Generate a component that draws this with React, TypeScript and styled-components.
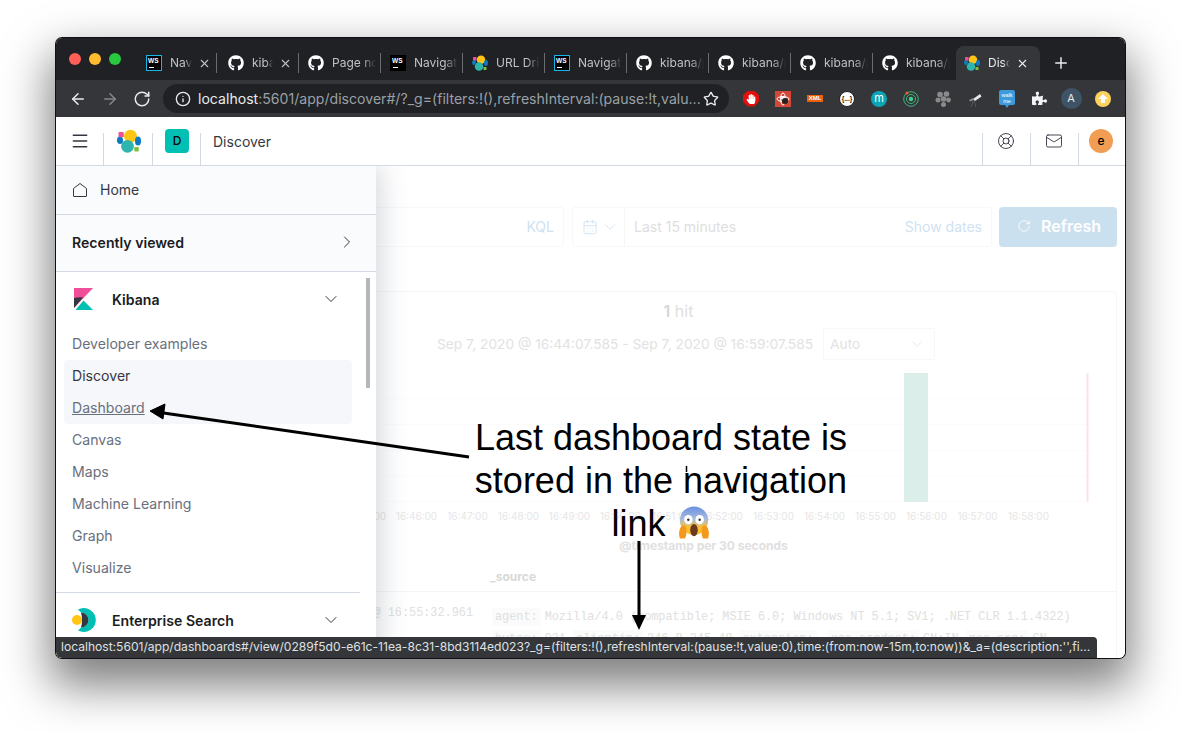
import React from 'react';
import styled, { createGlobalStyle } from 'styled-components';
import { ArrowLeft, ArrowRight, RotateCw, Info, Star, X, Plus, ChevronDown, ChevronRight, Menu, LifeBuoy, Mail, CalendarDays } from 'lucide-react';
import { FaGithub, FaHandPaper, FaPuzzlePiece } from 'react-icons/fa';

const Global = createGlobalStyle`
  html, body { margin: 0; padding: 0; background: #fff; width: 1181px; height: 732px; overflow: hidden; }
  * { box-sizing: border-box; }
  body { font-family: Inter, "Liberation Sans", sans-serif; }
`;

const Page = styled.div`
  width: 1181px;
  height: 732px;
  padding: 38px 0 0 56px;
`;
const Win = styled.div`
  width: 1069px;
  height: 620px;
  border-radius: 6px;
  overflow: hidden;
  display: flex;
  flex-direction: column;
  position: relative;
  box-shadow: 0 0 0 1px #111, 0 22px 46px 6px rgba(0,0,0,.5);
`;
const TitleBar = styled.div`
  height: 42px;
  background: #202124;
  display: flex;
  align-items: flex-end;
  flex-shrink: 0;
`;
const Lights = styled.div`
  width: 79px;
  height: 42px;
  padding: 15px 0 0 13px;
  display: flex;
  gap: 8px;
  flex-shrink: 0;
`;
const Light = styled.span<{ $c: string }>`
  width: 12px;
  height: 12px;
  border-radius: 50%;
  background: ${p => p.$c};
`;
const Tab = styled.div<{ $pad: number; $last?: boolean }>`
  width: 82px;
  height: 34px;
  padding: 0 0 0 ${p => p.$pad}px;
  display: flex;
  align-items: center;
  position: relative;
  flex-shrink: 0;
  color: #bdc1c6;
  ${p => (p.$last ? '' : `&::after { content: ''; position: absolute; right: 0; top: 7px; height: 20px; width: 1px; background: #6a6c70; }`)}
  svg.fav { flex-shrink: 0; }
`;
const ActiveTab = styled.div`
  width: 84px;
  height: 34px;
  margin-left: 1px;
  padding-left: 8px;
  display: flex;
  align-items: center;
  flex-shrink: 0;
  background: #35363a;
  border-radius: 8px 8px 0 0;
  color: #e8eaed;
  svg.fav { flex-shrink: 0; }
`;
const TabTitle = styled.span<{ $w: number }>`
  font: 12px/14px Inter, "Liberation Sans", sans-serif;
  margin: -1px 0 0 8px;
  width: ${p => p.$w}px;
  overflow: hidden;
  white-space: nowrap;
  mask-image: linear-gradient(to right, #000 70%, transparent);
`;
const TabClose = styled(X)`
  width: 13px;
  height: 13px;
  margin-left: 6px;
  flex-shrink: 0;
`;
const WsBadge = styled.span<{ $framed?: boolean }>`
  width: 16px;
  height: 16px;
  flex-shrink: 0;
  background: #000;
  border: 1px solid ${p => (p.$framed ? '#1bb5e8' : '#000')};
  color: #fff;
  font: 700 6.5px/7px "Liberation Sans", sans-serif;
  padding: 1px 0 0 1px;
  position: relative;
  &::after { content: ''; position: absolute; left: 2px; bottom: 2px; width: 5px; height: 1px; background: #fff; }
`;
const NewTab = styled(Plus)`
  color: #e8eaed;
  width: 18px;
  height: 18px;
  margin: 0 0 8px 12px;
`;
const Toolbar = styled.div`
  height: 37px;
  background: #35363a;
  display: flex;
  align-items: center;
  flex-shrink: 0;
  color: #e8eaed;
`;
const NavBtn = styled.span<{ $dim?: boolean }>`
  width: 32px;
  display: flex;
  justify-content: center;
  color: ${p => (p.$dim ? '#85878a' : '#e8eaed')};
  svg { width: 18px; height: 18px; }
`;
const NavGroup = styled.div`
  display: flex;
  padding-left: 6px;
  width: 107px;
  flex-shrink: 0;
`;
const Omni = styled.div`
  width: 566px;
  height: 29px;
  border-radius: 15px;
  background: #202124;
  display: flex;
  align-items: center;
  padding: 0 10px 0 12px;
  flex-shrink: 0;
`;
const OmniText = styled.div`
  font: 14.1px Inter, "Liberation Sans", sans-serif;
  color: #9aa0a6;
  margin-left: 7px;
  flex: 1;
  white-space: nowrap;
  overflow: hidden;
  b { font-weight: 400; color: #e8eaed; }
`;
const Exts = styled.div`
  display: flex;
  padding-left: 6px;
`;
const Ext = styled.span`
  width: 32px;
  height: 24px;
  display: flex;
  align-items: center;
  justify-content: center;
`;
const Octagon = styled.span`
  width: 16px;
  height: 16px;
  background: #e0100f;
  clip-path: polygon(30% 0, 70% 0, 100% 30%, 100% 70%, 70% 100%, 30% 100%, 0 70%, 0 30%);
  display: flex;
  align-items: center;
  justify-content: center;
`;
const Circle = styled.span<{ $bg: string; $size?: number; $fg?: string }>`
  width: ${p => p.$size ?? 16}px;
  height: ${p => p.$size ?? 16}px;
  border-radius: 50%;
  background: ${p => p.$bg};
  color: ${p => p.$fg ?? '#fff'};
  display: flex;
  align-items: center;
  justify-content: center;
  font: 11px/1 Inter, "Liberation Sans", sans-serif;
`;
const JsonBadge = styled.span`
  width: 16px;
  height: 16px;
  border-radius: 50%;
  background: #fff;
  border: 1px solid #222;
  color: #111;
  font: 700 6.5px/14px "Liberation Sans", sans-serif;
  text-align: center;
  white-space: nowrap;
`;
const XmlTag = styled.span`
  background: #e8650f;
  color: #fff;
  font: 700 6px/7px "Liberation Sans", sans-serif;
  width: 16px;
  height: 7px;
  text-align: center;
`;
const Header = styled.header`
  height: 49px;
  background: #fff;
  border-bottom: 1px solid #d3dae6;
  display: flex;
  align-items: stretch;
  flex-shrink: 0;
`;
const HeaderCell = styled.div<{ $w: number; $border: 'left' | 'right' }>`
  width: ${p => p.$w}px;
  flex-shrink: 0;
  display: flex;
  align-items: center;
  justify-content: center;
  position: relative;
  padding-right: ${p => (p.$border === 'left' ? 1 : 0)}px;
  &::after { content: ''; position: absolute; ${p => p.$border}: 0; top: 16px; bottom: 0; width: 1px; background: #d3dae6; }
`;
const SpaceBadge = styled.span`
  width: 24px;
  height: 24px;
  border-radius: 4px;
  background: #00bfb3;
  color: #000;
  font: 500 12px/24px Inter, sans-serif;
  text-align: center;
`;
const Crumb = styled.div`
  font: 400 14px Inter, sans-serif;
  color: #343741;
  padding-left: 12px;
  flex: 1;
  align-self: center;
`;
const Avatar = styled.span`
  width: 24px;
  height: 24px;
  border-radius: 50%;
  background: #f19e54;
  color: #000;
  font: 500 12px/24px Inter, sans-serif;
  text-align: center;
`;
const Body = styled.main`
  flex: 1;
  position: relative;
  overflow: hidden;
  background: #fff;
  padding: 41px 8px 0;
`;
const SearchRow = styled.div`
  display: flex;
  height: 40px;
  gap: 8px;
`;
const SearchBox = styled.div`
  flex: 1;
  border: 1px solid #f8f8f8;
  border-radius: 2px;
  display: flex;
  align-items: center;
  justify-content: flex-end;
  padding: 0 9px 1px 0;
  font-size: 14px;
  color: #cfe2f1;
`;
const DateBox = styled.div`
  width: 420px;
  margin-right: -1px;
  flex-shrink: 0;
  border: 1px solid #f8f8f8;
  border-radius: 2px;
  display: flex;
  align-items: center;
  font-size: 14px;
`;
const DatePick = styled.div`
  width: 52px;
  height: 100%;
  border-right: 1px solid #f6f6f6;
  display: flex;
  align-items: center;
  padding-left: 9px;
  gap: 3px;
  color: #cfe2f1;
  flex-shrink: 0;
`;
const DateText = styled.span`
  color: #dedede;
  margin: -1px 0 0 9px;
  flex: 1;
`;
const ShowDates = styled.span`
  color: #cfe2f1;
  margin: -1px 9px 0 0;
`;
const Refresh = styled.div`
  width: 118px;
  flex-shrink: 0;
  background: #cbe0ef;
  border-radius: 4px;
  color: #fff;
  font: 600 16px Inter, sans-serif;
  display: flex;
  align-items: center;
  justify-content: center;
  gap: 10px;
  padding: 0 0 2px 2px;
`;
const Panel = styled.section`
  margin-top: 44px;
  border: 1px solid #f7f7f7;
  border-radius: 4px 4px 0 0;
  height: 400px;
`;
const Hits = styled.div`
  padding: 9px 0 0 176px;
  text-align: center;
  font-size: 16px;
  line-height: 20px;
  color: #e0e0e0;
  b { font-weight: 600; color: #d6d6d6; }
`;
const RangeRow = styled.div`
  display: flex;
  align-items: center;
  padding-left: 372px;
  margin-top: 7px;
  height: 32px;
  font-size: 13.75px;
  color: #e2e2e2;
  white-space: nowrap;
`;
const AutoSelect = styled.div`
  margin-left: 10px;
  width: 112px;
  height: 32px;
  border: 1px solid #f8f8f8;
  display: flex;
  align-items: center;
  justify-content: space-between;
  padding: 0 8px 0 6px;
`;
const ChartSvg = styled.svg`
  display: block;
  margin-top: 13px;
`;
const Axis = styled.div`
  display: flex;
  padding-left: 275px;
  margin-top: 8px;
  font-size: 10px;
  line-height: 12px;
  color: #e6e6e6;
`;
const Tick = styled.span`
  width: 51px;
  flex-shrink: 0;
  text-align: center;
`;
const AxisTitle = styled.div`
  padding-left: 226px;
  margin-top: 17px;
  text-align: center;
  font: 700 12px/14px Inter, sans-serif;
  color: #e0e0e0;
`;
const SourceHead = styled.div`
  padding: 17px 0 0 425px;
  height: 39px;
  border-bottom: 1px solid #f6f6f6;
  font: 700 12px/14px Inter, sans-serif;
  color: #d8d8d8;
`;
const DocRow = styled.div`
  display: flex;
  padding-top: 11px;
  font: 11.85px/22px "Liberation Mono", monospace;
  color: #e0e0e0;
`;
const DocTime = styled.div`
  width: 408px;
  flex-shrink: 0;
  text-align: right;
  white-space: nowrap;
  line-height: 20px;
`;
const DocBody = styled.div`
  padding: 3px 0 0 19px;
  white-space: nowrap;
`;
const DocKey = styled.span`
  background: #fbfbfb;
  padding: 2px 3px;
  margin-right: 4px;
`;
const Flyout = styled.nav`
  position: absolute;
  left: 0;
  top: 0;
  bottom: 0;
  width: 320px;
  background: #fff;
  box-shadow: 4px 0 26px rgba(60,70,90,.22);
  overflow: hidden;
`;
const HomeRow = styled.div`
  height: 49px;
  background: #fafbfd;
  border-bottom: 1px solid #d3dae6;
  display: flex;
  align-items: center;
  padding: 0 0 1px 16px;
  gap: 12px;
  font-size: 14px;
  color: #343741;
`;
const RecentRow = styled.div`
  height: 57px;
  background: #fafbfd;
  border-bottom: 1px solid #d3dae6;
  display: flex;
  align-items: center;
  justify-content: space-between;
  padding: 0 19px 2px 16px;
  font-weight: 600;
  font-size: 14.1px;
  color: #1a1c21;
`;
const Group = styled.div`
  height: 56px;
  display: flex;
  align-items: center;
  padding: 0 35px 2px 16px;
  font-weight: 600;
  font-size: 14.1px;
  color: #1a1c21;
  gap: 16px;
  span { flex: 1; }
`;
const Item = styled.div<{ $state?: 'current' | 'hover' }>`
  height: 32px;
  margin: 0 24px 0 8px;
  padding: 0 8px 2px;
  display: flex;
  align-items: center;
  font-size: 14.1px;
  border-radius: ${p => (p.$state === 'current' ? '4px 4px 0 0' : p.$state === 'hover' ? '0 0 4px 4px' : '4px')};
  background: ${p => (p.$state ? '#f5f7fa' : 'transparent')};
  color: ${p => (p.$state === 'current' ? '#343741' : '#69707d')};
  text-decoration: ${p => (p.$state === 'hover' ? 'underline' : 'none')};
`;
const Divider = styled.div`
  height: 1px;
  margin: 8px 16px 0 0;
  background: #d3dae6;
`;
const Scrollbar = styled.div`
  position: absolute;
  left: 310px;
  top: 112px;
  width: 4px;
  height: 110px;
  background: #b5b7bd;
`;
const StatusBar = styled.div`
  position: absolute;
  left: 0;
  bottom: 0;
  width: 1041px;
  height: 21px;
  background: #35363a;
  color: #dfe1e3;
  font: 12.08px/20px Inter, "Liberation Sans", sans-serif;
  padding: 0 5px;
  border-radius: 0 4px 0 0;
  white-space: nowrap;
  overflow: hidden;
`;
const Overlay = styled.svg`
  position: absolute;
  left: 0;
  top: 0;
  pointer-events: none;
`;
const Note = styled.div`
  position: absolute;
  left: 385px;
  top: 378px;
  width: 440px;
  text-align: center;
  font: 36px/43px "Liberation Sans", Arial, sans-serif;
  color: #000;
  white-space: nowrap;
`;
const NoteIcon = styled.svg`
  display: inline-block;
  vertical-align: -4px;
  margin-left: 11px;
`;

const ElasticLogo = ({ size = 16 }: { size?: number }) => (
  <svg className="fav" width={size} height={size} viewBox="0 0 32 32">
    <circle cx="18" cy="9.5" r="8.5" fill="#fec514" />
    <circle cx="14" cy="23" r="8.5" fill="#2eb5ae" />
    <ellipse cx="4" cy="15" rx="4" ry="5" fill="#0b7ac2" />
    <ellipse cx="28" cy="16" rx="4" ry="6" fill="#0b7ac2" />
    <rect x="2" y="4" width="7" height="7" rx="1" fill="#f04e98" />
    <rect x="23" y="24" width="6" height="6" rx="1" fill="#7fc13f" />
  </svg>
);
const Github = () => <FaGithub className="fav" size={16} color="#fff" />;

const tabs = [
  { k: 'ws', framed: true, t: 'Navigation', w: 22, close: true, pad: 11 },
  { k: 'gh', t: 'kibana/', w: 21, close: true, pad: 11 },
  { k: 'gh', t: 'Page not found', w: 44, pad: 9 },
  { k: 'ws', t: 'Navigation', w: 44, pad: 9 },
  { k: 'el', t: 'URL Drilldown', w: 44, pad: 9 },
  { k: 'ws', framed: true, t: 'Navigation', w: 44, pad: 9 },
  { k: 'gh', t: 'kibana/pull', w: 44, pad: 9 },
  { k: 'gh', t: 'kibana/pull', w: 44, pad: 9 },
  { k: 'gh', t: 'kibana/pull', w: 44, pad: 9 },
  { k: 'gh', t: 'kibana/pull', w: 44, pad: 9, last: true },
];
const ticks = ['16:45:00','16:46:00','16:47:00','16:48:00','16:49:00','16:50:00','16:51:00','16:52:00','16:53:00','16:54:00','16:55:00','16:56:00','16:57:00','16:58:00'];
const links = ['Canvas', 'Maps', 'Machine Learning', 'Graph', 'Visualize'];

export default function App() {
  return (
    <>
      <Global />
      <Page>
        <Win>
          <TitleBar>
            <Lights>
              <Light $c="#ff5f57" />
              <Light $c="#febc2e" />
              <Light $c="#28c840" />
            </Lights>
            {tabs.map((t, i) => (
              <Tab key={i} $pad={t.pad} $last={t.last}>
                {t.k === 'ws' ? <WsBadge $framed={t.framed}>WS</WsBadge> : t.k === 'gh' ? <Github /> : <ElasticLogo />}
                <TabTitle $w={t.w}>{t.t}</TabTitle>
                {t.close && <TabClose />}
              </Tab>
            ))}
            <ActiveTab>
              <ElasticLogo />
              <TabTitle $w={22}>Discover</TabTitle>
              <TabClose />
            </ActiveTab>
            <NewTab />
          </TitleBar>
          <Toolbar>
            <NavGroup>
              <NavBtn><ArrowLeft /></NavBtn>
              <NavBtn $dim><ArrowRight /></NavBtn>
              <NavBtn><RotateCw /></NavBtn>
            </NavGroup>
            <Omni>
              <Info size={16} color="#e8eaed" />
              <OmniText><b>localhost</b>:5601/app/discover#/?_g=(filters:!(),refreshInterval:(pause:!t,valu...</OmniText>
              <Star size={16} color="#e8eaed" />
            </Omni>
            <Exts>
              <Ext><Octagon><FaHandPaper size={10} color="#fff" /></Octagon></Ext>
              <Ext>
                <svg width="16" height="16" viewBox="0 0 16 16">
                  <rect width="16" height="16" fill="#d4483a" />
                  <circle cx="8" cy="7" r="2" fill="#fff" />
                  <ellipse cx="8" cy="8" rx="6" ry="2.4" fill="none" stroke="#fff" />
                  <ellipse cx="8" cy="8" rx="2.4" ry="6" fill="none" stroke="#fff" />
                  <circle cx="10" cy="10" r="3" fill="#222" />
                </svg>
              </Ext>
              <Ext><XmlTag>XML</XmlTag></Ext>
              <Ext><JsonBadge>{'{...}'}</JsonBadge></Ext>
              <Ext><Circle $bg="#0aa5b5" $fg="#fff">m</Circle></Ext>
              <Ext>
                <svg width="16" height="16" viewBox="0 0 16 16">
                  <circle cx="8" cy="8" r="7.3" fill="none" stroke="#3fb57d" />
                  <circle cx="8" cy="8" r="4.5" fill="none" stroke="#3fb57d" />
                  <circle cx="8" cy="8" r="2.2" fill="#3fd08a" />
                  <circle cx="4" cy="2" r="1.6" fill="#e8602c" />
                </svg>
              </Ext>
              <Ext>
                <svg width="16" height="16" viewBox="0 0 16 16" fill="#8a8a8a">
                  <circle cx="5" cy="3.5" r="2.8" /><circle cx="11.5" cy="3" r="2.8" />
                  <circle cx="3" cy="9" r="2.5" /><circle cx="8.5" cy="8" r="2.8" />
                  <circle cx="13.5" cy="9" r="2.4" /><circle cx="8.5" cy="13.5" r="2.5" />
                </svg>
              </Ext>
              <Ext>
                <svg width="16" height="16" viewBox="0 0 16 16">
                  <path d="M6 8l7-5 1.5 2.5L8 10z" fill="#e8e8e8" />
                  <path d="M2 9l4-2 1 2-4 1.5z" fill="#8a8c90" />
                  <path d="M6 10l-2 6M7 10l2 6" stroke="#55585c" fill="none" />
                </svg>
              </Ext>
              <Ext>
                <svg width="16" height="18" viewBox="0 0 16 18">
                  <path d="M2 0h12a2 2 0 0 1 2 2v11a2 2 0 0 1-2 2h-4l-2 3-2-3H2a2 2 0 0 1-2-2V2a2 2 0 0 1 2-2z" fill="#3c9bdc" />
                  <text x="8" y="7" fontSize="5.5" fontFamily="Liberation Sans" textAnchor="middle" fill="#fff">walk</text>
                  <text x="8" y="12.5" fontSize="5.5" fontFamily="Liberation Sans" textAnchor="middle" fill="#fff">me</text>
                </svg>
              </Ext>
              <Ext><FaPuzzlePiece size={15} color="#f1f3f4" /></Ext>
              <Ext><Circle $bg="#3e5366" $size={21} $fg="#e8eaed">A</Circle></Ext>
              <Ext>
                <Circle $bg="#fcd35d" $size={16}>
                  <svg width="10" height="10" viewBox="0 0 10 10"><path d="M5 0l5 5H7v4H3V5H0z" fill="#fff" /></svg>
                </Circle>
              </Ext>
            </Exts>
          </Toolbar>
          <Header>
            <HeaderCell $w={48} $border="right"><Menu size={20} color="#343741" strokeWidth={1.8} /></HeaderCell>
            <HeaderCell $w={49} $border="right"><ElasticLogo size={24} /></HeaderCell>
            <HeaderCell $w={48} $border="right"><SpaceBadge>D</SpaceBadge></HeaderCell>
            <Crumb>Discover</Crumb>
            <HeaderCell $w={48} $border="left"><LifeBuoy size={18} color="#343741" strokeWidth={1.2} /></HeaderCell>
            <HeaderCell $w={48} $border="left"><Mail size={18} color="#343741" strokeWidth={1.2} /></HeaderCell>
            <HeaderCell $w={47} $border="left"><Avatar>e</Avatar></HeaderCell>
          </Header>
          <Body>
            <SearchRow>
              <SearchBox>KQL</SearchBox>
              <DateBox>
                <DatePick><CalendarDays size={16} strokeWidth={1.4} /><ChevronDown size={18} strokeWidth={1.2} /></DatePick>
                <DateText>Last 15 minutes</DateText>
                <ShowDates>Show dates</ShowDates>
              </DateBox>
              <Refresh><RotateCw size={14} strokeWidth={1.4} />Refresh</Refresh>
            </SearchRow>
            <Panel>
              <Hits><b>1</b> hit</Hits>
              <RangeRow>
                Sep 7, 2020 @ 16:44:07.585 - Sep 7, 2020 @ 16:59:07.585
                <AutoSelect>Auto<ChevronDown size={18} strokeWidth={1.1} /></AutoSelect>
              </RangeRow>
              <ChartSvg width="1051" height="129" viewBox="0 0 1051 129">
                <path d="M320 25.5H1024M320 51.5H1024M320 77.5H1024M320 103.5H1024M320 128.5H1024" stroke="#fbfbfb" />
                <rect x="839" width="24" height="129" fill="#dbeee9" />
                <rect x="1021.5" width="2" height="129" fill="#fbe3e3" />
              </ChartSvg>
              <Axis>{ticks.map(t => <Tick key={t}>{t}</Tick>)}</Axis>
              <AxisTitle>@timestamp per 30 seconds</AxisTitle>
              <SourceHead>_source</SourceHead>
              <DocRow>
                <DocTime>Sep 7, 2020 @ 16:55:32.961</DocTime>
                <DocBody>
                  <DocKey>agent:</DocKey>Mozilla/4.0 (compatible; MSIE 6.0; Windows NT 5.1; SV1; .NET CLR 1.1.4322)<br />
                  <DocKey>bytes:</DocKey>931 <DocKey>clientip:</DocKey>246.8.245.48 <DocKey>extension:</DocKey> <DocKey>geo.srcdest:</DocKey>CN:IN <DocKey>geo.src:</DocKey>CN
                </DocBody>
              </DocRow>
            </Panel>
            <Flyout>
              <HomeRow>
                <svg width="16" height="16" viewBox="0 0 16 16" fill="none" stroke="#343741">
                  <path d="M1.5 6.5L8 1.5l6.5 5V14a.5.5 0 0 1-.5.5H2a.5.5 0 0 1-.5-.5z" />
                </svg>
                Home
              </HomeRow>
              <RecentRow>Recently viewed<ChevronRight size={20} strokeWidth={1.2} color="#343741" /></RecentRow>
              <Group>
                <svg width="22" height="24" viewBox="0 0 22 24" style={{ marginLeft: 1, marginRight: 1 }}>
                  <path d="M1 1h19L1 21z" fill="#f04e98" />
                  <path d="M1 11c4-1 7-1 9-.5L1 21z" fill="#343741" />
                  <path d="M2.5 23l8-9.5L20 23z" fill="#00bfb3" />
                </svg>
                <span>Kibana</span>
                <ChevronDown size={20} strokeWidth={1.2} color="#343741" />
              </Group>
              <Item>Developer examples</Item>
              <Item $state="current">Discover</Item>
              <Item $state="hover">Dashboard</Item>
              {links.map(l => <Item key={l}>{l}</Item>)}
              <Divider />
              <Group>
                <svg width="24" height="24" viewBox="0 0 24 24">
                  <path d="M6 1.5A12 12 0 1 1 6 22.5L9 19.5A7.5 7.5 0 0 0 9 4.5Z" fill="#00bfb3" />
                  <path d="M9 4.5A7.5 7.5 0 0 1 9 19.5A28 28 0 0 0 9 4.5Z" fill="#343741" />
                  <circle cx="5" cy="12" r="5" fill="#fec514" />
                </svg>
                <span>Enterprise Search</span>
                <ChevronDown size={20} strokeWidth={1.2} color="#343741" />
              </Group>
              <Scrollbar />
            </Flyout>
          </Body>
          <StatusBar>localhost:5601/app/dashboards#/view/0289f5d0-e61c-11ea-8c31-8bd3114ed023?_g=(filters:!(),refreshInterval:(pause:!t,value:0),time:(from:now-15m,to:now))&amp;_a=(description:'',fi...</StatusBar>
          <Note>
            Last dashboard state is<br />
            stored in the navigation<br />
            link
            <NoteIcon width="34" height="35" viewBox="0 0 36 36">
              <defs>
                <linearGradient id="scream" x1="0" y1="0" x2="0" y2="1">
                  <stop offset="0" stopColor="#6a8fe0" />
                  <stop offset="0.45" stopColor="#a8bce0" />
                  <stop offset="0.75" stopColor="#fbc02d" />
                </linearGradient>
              </defs>
              <circle cx="18" cy="16" r="15" fill="url(#scream)" />
              <ellipse cx="12" cy="15" rx="4.5" ry="5" fill="#fff" />
              <ellipse cx="24" cy="15" rx="4.5" ry="5" fill="#fff" />
              <circle cx="12" cy="15" r="1.3" fill="#333" />
              <circle cx="24" cy="15" r="1.3" fill="#333" />
              <ellipse cx="18" cy="26" rx="4" ry="6.5" fill="#6b3a1e" />
              <path d="M3 35c-2-7 0-13 4-14 3 0 3 4 3 7s-1 7-2 7zM33 35c2-7 0-13-4-14-3 0-3 4-3 7s1 7 2 7z" fill="#f39a1e" />
            </NoteIcon>
          </Note>
          <Overlay width="1069" height="620" viewBox="0 0 1069 620">
            <path d="M413 419L104 374.5" stroke="#000" strokeWidth="3" />
            <path d="M94 373l15-7-2 15z" fill="#000" stroke="#000" />
            <path d="M583 503V580" stroke="#000" strokeWidth="3" />
            <path d="M576 577h14l-7 15z" fill="#000" />
            <path d="M630.5 428v6M679.5 448v6" stroke="#000" strokeWidth="1.5" />
          </Overlay>
        </Win>
      </Page>
    </>
  );
}
